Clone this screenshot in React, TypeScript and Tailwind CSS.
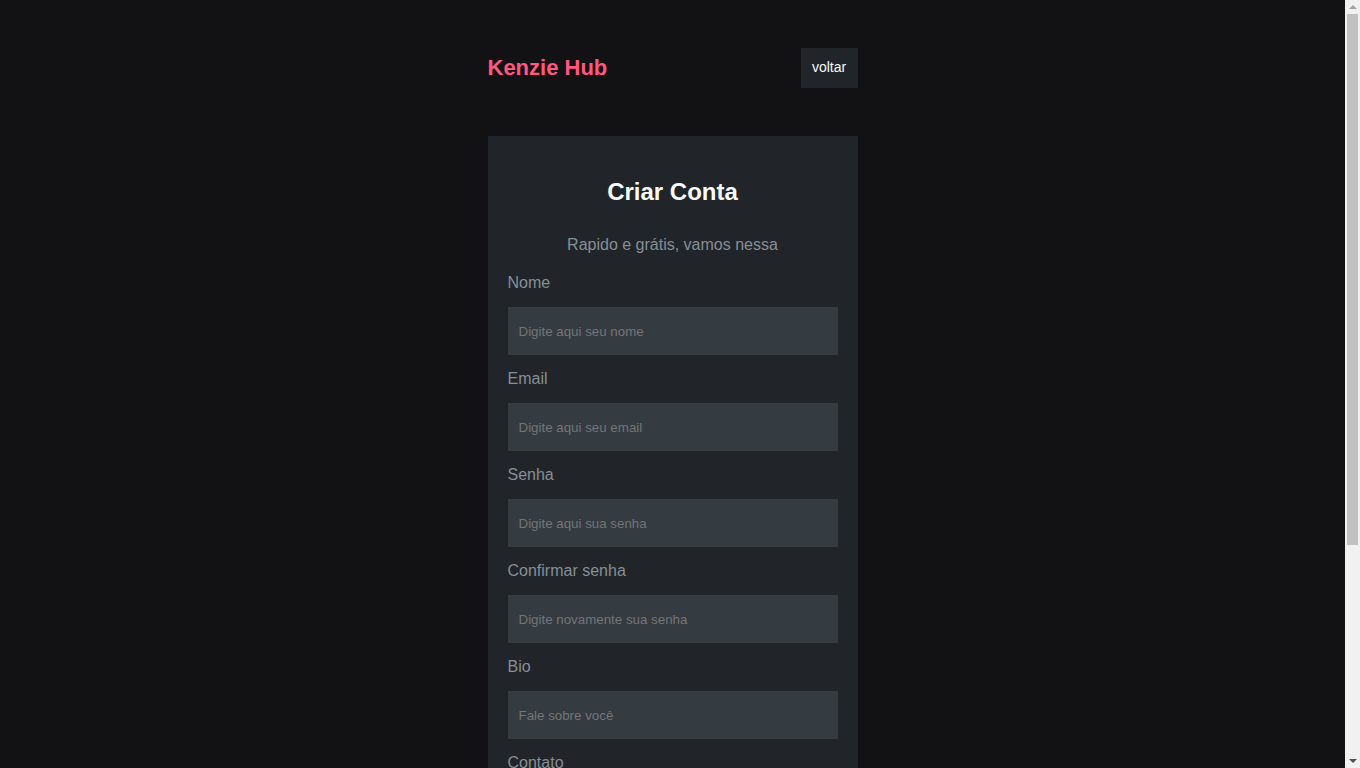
export default function App() {
  const fields = [
    { label: "Nome", placeholder: "Digite aqui seu nome", type: "text" },
    { label: "Email", placeholder: "Digite aqui seu email", type: "email" },
    { label: "Senha", placeholder: "Digite aqui sua senha", type: "password" },
    { label: "Confirmar senha", placeholder: "Digite novamente sua senha", type: "password" },
    { label: "Bio", placeholder: "Fale sobre você", type: "text" },
    { label: "Contato", placeholder: "Opção de contato", type: "text" },
  ];

  return (
    <div className="min-h-screen bg-[#121214] pr-[15px] font-['Liberation_Sans',Arial,sans-serif]">
      <div className="w-[370px] mx-auto pt-[48px] pb-[24px]">
        {/* Header */}
        <header className="flex items-center justify-between h-[40px]">
          <h1 className="text-[22px] font-bold text-[#FF577F] leading-none">Kenzie Hub</h1>
          <button className="h-[40px] w-[57px] pb-[2px] bg-[#212529] text-[14px] text-[#F8F9FA]">voltar</button>
        </header>

        {/* Form card */}
        <form className="mt-[48px] bg-[#212529] px-[20px] pt-[42px] pb-[32px] flex flex-col">
          <h2 className="text-[24px] leading-[28px] font-bold text-[#F8F9FA] text-center">Criar Conta</h2>
          <p className="mt-[30px] text-[16px] leading-[18px] text-[#868E96] text-center">
            Rapido e grátis, vamos nessa
          </p>

          <div className="mt-[18px] flex flex-col">
            {fields.map((f) => (
              <div key={f.label} className="flex flex-col mb-[13px]">
                <label className="mt-[1px] text-[16px] leading-[20px] text-[#868E96]">{f.label}</label>
                <input
                  type={f.type}
                  placeholder={f.placeholder}
                  className="mt-[14px] h-[48px] w-full bg-[#343B41] px-[11px] text-[13.333px] text-[#F8F9FA] placeholder:text-[#757575] outline-none"
                />
              </div>
            ))}
            <div className="flex flex-col mb-[13px]">
              <label className="mt-[1px] text-[16px] leading-[20px] text-[#868E96]">Selecionar módulo</label>
              <select className="mt-[14px] h-[48px] w-full bg-[#343B41] px-[11px] text-[13.333px] text-[#868E96] outline-none">
                <option>Primeiro módulo (Introdução ao Frontend)</option>
                <option>Segundo módulo (Frontend Avançado)</option>
                <option>Terceiro módulo (Introdução ao Backend)</option>
                <option>Quarto módulo (Backend Avançado)</option>
              </select>
            </div>
          </div>

          <button
            type="submit"
            className="mt-[10px] h-[48px] w-full bg-[#59323F] text-[16px] text-white"
          >
            Cadastrar
          </button>
        </form>
      </div>

      {/* Browser scrollbar */}
      <div className="fixed top-0 right-0 h-screen w-[15px] bg-[#f1f1f1] flex flex-col items-center">
        <div className="h-[14px] w-full flex items-center justify-center">
          <div className="w-0 h-0 border-l-[4px] border-r-[4px] border-b-[4px] border-l-transparent border-r-transparent border-b-[#a3a3a3]" />
        </div>
        <div className="w-[11px] h-[531px] bg-[#c1c1c1]" />
        <div className="flex-1" />
        <div className="h-[14px] w-full flex items-center justify-center">
          <div className="w-0 h-0 border-l-[4px] border-r-[4px] border-t-[4px] border-l-transparent border-r-transparent border-t-[#505050]" />
        </div>
      </div>
    </div>
  );
}
